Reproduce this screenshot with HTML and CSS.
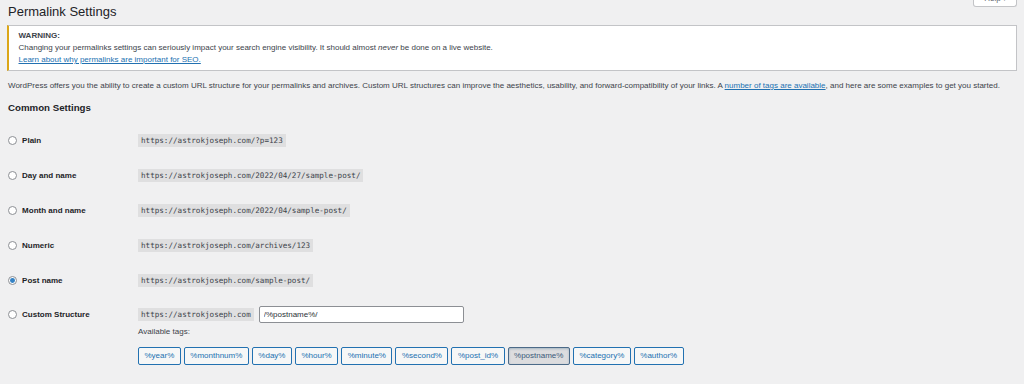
FILE: index.html
```html
<!DOCTYPE html>
<html lang="en">
<head>
<meta charset="utf-8">
<title>Permalink Settings</title>
<link rel="stylesheet" href="styles.css">
</head>
<body>
<div class="wrap">
  <button class="help-tab" type="button">Help <span class="caret">▾</span></button>
  <h1 class="page-title">Permalink Settings</h1>
  <div class="notice">
    <p class="notice-title">WARNING:</p>
    <p>Changing your permalinks settings can seriously impact your search engine visibility. It should almost <em>never</em> be done on a live website.</p>
    <p><a href="#">Learn about why permalinks are important for SEO.</a></p>
  </div>
  <p class="intro">WordPress offers you the ability to create a custom URL structure for your permalinks and archives. Custom URL structures can improve the aesthetics, usability, and forward-compatibility of your links. A <a href="#">number of tags are available</a>, and here are some examples to get you started.</p>
  <h2 class="section-title">Common Settings</h2>
  <div class="options">
    <div class="row">
      <label class="opt"><span class="radio"></span>Plain</label>
      <code class="url">https://astrokjoseph.com/?p=123</code>
    </div>
    <div class="row">
      <label class="opt"><span class="radio"></span>Day and name</label>
      <code class="url">https://astrokjoseph.com/2022/04/27/sample-post/</code>
    </div>
    <div class="row">
      <label class="opt"><span class="radio"></span>Month and name</label>
      <code class="url">https://astrokjoseph.com/2022/04/sample-post/</code>
    </div>
    <div class="row">
      <label class="opt"><span class="radio"></span>Numeric</label>
      <code class="url">https://astrokjoseph.com/archives/123</code>
    </div>
    <div class="row">
      <label class="opt"><span class="radio checked"></span>Post name</label>
      <code class="url">https://astrokjoseph.com/sample-post/</code>
    </div>
    <div class="row row-custom">
      <label class="opt opt-custom"><span class="radio"></span>Custom Structure</label>
      <div class="custom">
        <div class="custom-line">
          <code class="url">https://astrokjoseph.com</code>
          <input class="structure" type="text" value="/%postname%/">
        </div>
        <p class="avail">Available tags:</p>
        <div class="tags">
          <button class="tag" type="button">%year%</button>
          <button class="tag" type="button">%monthnum%</button>
          <button class="tag" type="button">%day%</button>
          <button class="tag" type="button">%hour%</button>
          <button class="tag" type="button">%minute%</button>
          <button class="tag" type="button">%second%</button>
          <button class="tag" type="button">%post_id%</button>
          <button class="tag active" type="button">%postname%</button>
          <button class="tag" type="button">%category%</button>
          <button class="tag" type="button">%author%</button>
        </div>
      </div>
    </div>
  </div>
</div>
</body>
</html>
```
FILE: styles.css
```css
html, body {
  margin: 0;
  padding: 0;
}
body {
  background: #f0f0f1;
  color: #3c434a;
  font-family: "Liberation Sans", Arial, sans-serif;
  font-size: 8px;
  line-height: 12px;
  overflow: hidden;
}
.wrap {
  position: relative;
  padding: 0 7px;
}
.help-tab {
  position: absolute;
  top: -9px;
  right: 7px;
  width: 44px;
  height: 16px;
  background: #fff;
  border: 1px solid #c3c4c7;
  border-top: none;
  border-radius: 0 0 3px 3px;
  color: #646970;
  font-family: inherit;
  font-size: 8px;
  padding: 1px 0 0;
  line-height: 12px;
}
.caret {
  font-size: 6px;
}
.page-title {
  margin: 0;
  padding: 3px 0 0 1px;
  font-size: 13px;
  line-height: 18px;
  font-weight: 400;
  color: #1d2327;
}
.notice {
  margin-top: 4px;
  background: #fff;
  border: 1px solid #c3c4c7;
  border-left: 2.5px solid #dba617;
  padding: 4px 9.5px;
  color: #3c434a;
}
.notice p {
  margin: 0;
  line-height: 12px;
}
.notice-title {
  font-weight: 700;
  color: #3c434a;
}
a {
  color: #2271b1;
  text-decoration: underline;
}
.intro {
  margin: 9px 0 0 1px;
  line-height: 12px;
}
.section-title {
  margin: 9px 0 0 1px;
  font-size: 9.7px;
  line-height: 14px;
  font-weight: 700;
  color: #1d2327;
}
.options {
  margin-top: 8px;
}
.row {
  display: grid;
  grid-template-columns: 131px auto;
  align-items: center;
  height: 35px;
}
.row-custom {
  align-items: start;
  height: auto;
  padding-top: 8px;
}
.opt {
  display: flex;
  align-items: center;
  gap: 5px;
  font-weight: 700;
  color: #1d2327;
  padding-left: 0.5px;
}
.opt-custom {
  height: 17px;
}
.radio {
  box-sizing: border-box;
  width: 9.6px;
  height: 9.6px;
  border: 1px solid #8c8f94;
  border-radius: 50%;
  background: #fff;
  display: flex;
  align-items: center;
  justify-content: center;
}
.radio.checked::after {
  content: "";
  width: 4.8px;
  height: 4.8px;
  border-radius: 50%;
  background: #3582c4;
}
.url {
  justify-self: start;
  font-family: "DejaVu Sans Mono", "Liberation Mono", monospace;
  font-size: 7.6px;
  line-height: 9px;
  padding: 2px 3px;
  background: #dfdfe0;
  color: #3c434a;
}
.custom-line {
  display: flex;
  align-items: center;
  gap: 5px;
}
.structure {
  box-sizing: border-box;
  width: 205px;
  height: 17px;
  margin: 0;
  border: 1px solid #8c8f94;
  border-radius: 2px;
  background: #fff;
  padding: 0 4px;
  font-family: "Liberation Sans", Arial, sans-serif;
  font-size: 8px;
  color: #2c3338;
}
.avail {
  margin: 3px 0 0;
  line-height: 12px;
}
.tags {
  display: flex;
  gap: 3px;
  margin-top: 9px;
}
.tag {
  height: 18px;
  margin: 0;
  padding: 0 5.5px;
  border: 1px solid #2271b1;
  border-radius: 2px;
  background: #f6f7f7;
  color: #2271b1;
  font-family: "Liberation Sans", Arial, sans-serif;
  font-size: 8px;
  line-height: 16px;
}
.tag.active {
  background: #dcdcde;
  border-color: #4b6a88;
  color: #3b5a7a;
  box-shadow: inset 0 1px 3px -1px rgba(10, 75, 120, 0.5);
}
```
